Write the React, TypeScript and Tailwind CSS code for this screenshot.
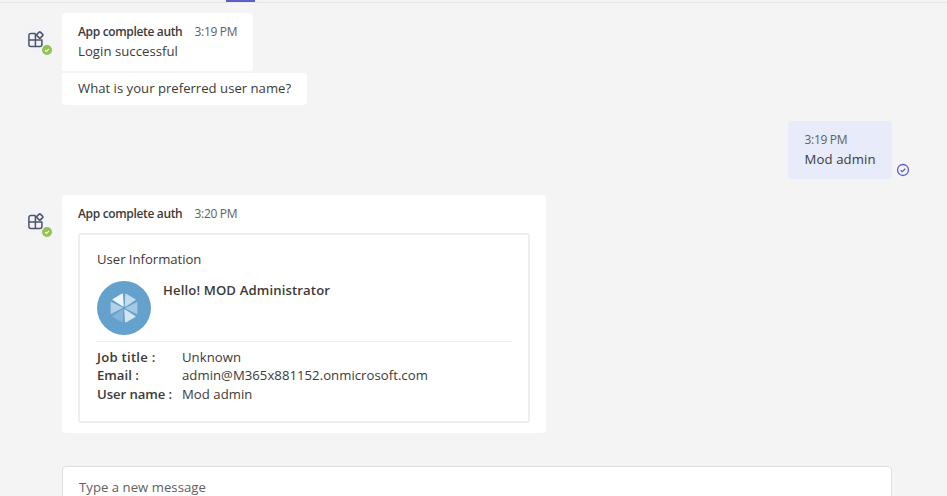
import React from "react";

function AppAvatar() {
  return (
    <div className="relative mt-[12px] ml-[22px] h-7 w-7 shrink-0">
      <div className="flex h-[28px] w-[28px] items-center justify-center rounded-full bg-[#f1f3f8]">
        <svg width="18" height="18" viewBox="0 0 18 18" fill="none" stroke="#4d5467" strokeWidth="1.5" strokeLinejoin="round">
          <path d="M8.5 3.4H3.9a2 2 0 0 0-2 2v9a2 2 0 0 0 2 2h9a2 2 0 0 0 2-2V9.9H1.9M8.4 3.4v13" />
          <path d="M12.2 2.1q.6-.6 1.2 0l2.3 2.3q.6.6 0 1.2l-2.3 2.3q-.6.6-1.2 0L9.9 5.6q-.6-.6 0-1.2z" fill="#f1f3f8" />
        </svg>
      </div>
      <svg className="absolute top-[20px] left-[20px]" width="10" height="10" viewBox="0 0 10 10">
        <circle cx="5" cy="5" r="5" fill="#92c353" />
        <path d="M3 5.1l1.4 1.4L7.1 3.8" fill="none" stroke="#fff" strokeWidth="1.1" />
      </svg>
    </div>
  );
}

function Header({ time }: { time: string }) {
  return (
    <div className="flex h-4 items-center text-[12px] leading-4">
      <span className="w-[116.5px] shrink-0 font-semibold tracking-[-0.34px] text-[#3b3a39]">App complete auth</span>
      <span className="shrink-0 tracking-[-0.3px] text-[#616161]">{time}</span>
    </div>
  );
}

const petals = ["#eef5fa", "#c3dbeb", "#a6c9e1", "#d3e5f1", "#84b4d6", "#b3d1e6"];

function ProfilePicture() {
  return (
    <svg className="shrink-0" width="54" height="54" viewBox="0 0 54 54">
      <circle cx="27" cy="27" r="27" fill="#64a1cc" />
      {petals.map((color, i) => (
        <path
          key={i}
          d="M26.2 25L25.4 13.1L16 18.5Z"
          fill={color}
          stroke={color}
          strokeWidth="1.1"
          strokeLinejoin="round"
          transform={`rotate(${i * 60} 27 27)`}
        />
      ))}
    </svg>
  );
}

function Fact({ label, value, labelClass, rowClass }: { label: string; value: string; labelClass: string; rowClass: string }) {
  return (
    <div className={`flex ${rowClass}`}>
      <span className={`w-[85px] shrink-0 font-semibold whitespace-nowrap ${labelClass}`}>{label}</span>
      <span className="tracking-[0.04px]">{value}</span>
    </div>
  );
}

export default function App() {
  return (
    <div className="flex h-[496px] w-[947px] flex-col overflow-hidden bg-[#f4f4f4] font-['Open_Sans','Noto_Sans',sans-serif] text-[13.15px] leading-[19px] whitespace-nowrap text-[#3b3a39]">
      <div className="h-[3px] shrink-0 border-b border-[#e6e6e6]">
        <div className="ml-[226px] h-[2px] w-[29px] bg-[#5b5fc7]" />
      </div>

      <div className="mt-[10px] flex h-[92px] shrink-0">
        <AppAvatar />
        <div className="ml-[12px] flex flex-col items-start gap-[2px]">
          <div className="h-[58px] w-[191px] rounded-[4px] rounded-bl-none bg-white px-4 pt-[11px]">
            <Header time="3:19 PM" />
            <div className="mt-[2px] tracking-[0.04px]">Login successful</div>
          </div>
          <div className="h-[32px] w-[245px] rounded-[4px] rounded-tl-none bg-white px-4 pt-[6px]">
            What is your preferred user name?
          </div>
        </div>
      </div>

      <div className="mt-4 flex h-[58px] shrink-0 justify-end pr-[37px]">
        <div className="h-[58px] w-[104px] rounded-[4px] bg-[#e8ebfa] pt-[11px] pl-[16.5px]">
          <div className="text-[12px] leading-4 tracking-[-0.3px] text-[#616161]">3:19 PM</div>
          <div className="mt-[2px] tracking-[0.12px]">Mod admin</div>
        </div>
        <svg className="mt-[42px] ml-1 shrink-0" width="14" height="14" viewBox="0 0 14 14" fill="none" stroke="#5b5fc7" strokeWidth="1.3">
          <circle cx="7" cy="7" r="5.5" />
          <path d="M4.7 7.2l1.6 1.5 3-3" />
        </svg>
      </div>

      <div className="mt-4 flex h-[238px] shrink-0">
        <AppAvatar />
        <div className="ml-[12px] h-[238px] w-[484px] rounded-[4px] bg-white px-4 pt-[11px]">
          <Header time="3:20 PM" />
          <div className="mt-[11px] h-[190px] w-[452px] rounded-[3px] border-2 border-[#eeeeee] px-[17px] pt-[15px]">
            <div className="tracking-[-0.03px]">User Information</div>
            <div className="mt-[12px] flex h-[54px]">
              <ProfilePicture />
              <div className="ml-3 font-semibold tracking-[0.12px]">Hello! MOD Administrator</div>
            </div>
            <div className="mt-[6px] h-px bg-[#eeeeee]" />
            <div className="mt-[6px]">
              <Fact label="Job title :" value="Unknown" rowClass="h-[18px]" labelClass="tracking-[0.25px]" />
              <Fact label="Email :" value="admin@M365x881152.onmicrosoft.com" rowClass="h-[19px]" labelClass="" />
              <Fact label="User name :" value="Mod admin" rowClass="h-[19px]" labelClass="tracking-[-0.08px]" />
            </div>
          </div>
        </div>
      </div>

      <div className="mt-[33px] ml-[62px] h-[44px] w-[830px] shrink-0 rounded-[4px] border border-[#e1dfdd] bg-white pt-[11px] pl-4 tracking-[0.03px] text-[#616161]">
        Type a new message
      </div>
    </div>
  );
}
